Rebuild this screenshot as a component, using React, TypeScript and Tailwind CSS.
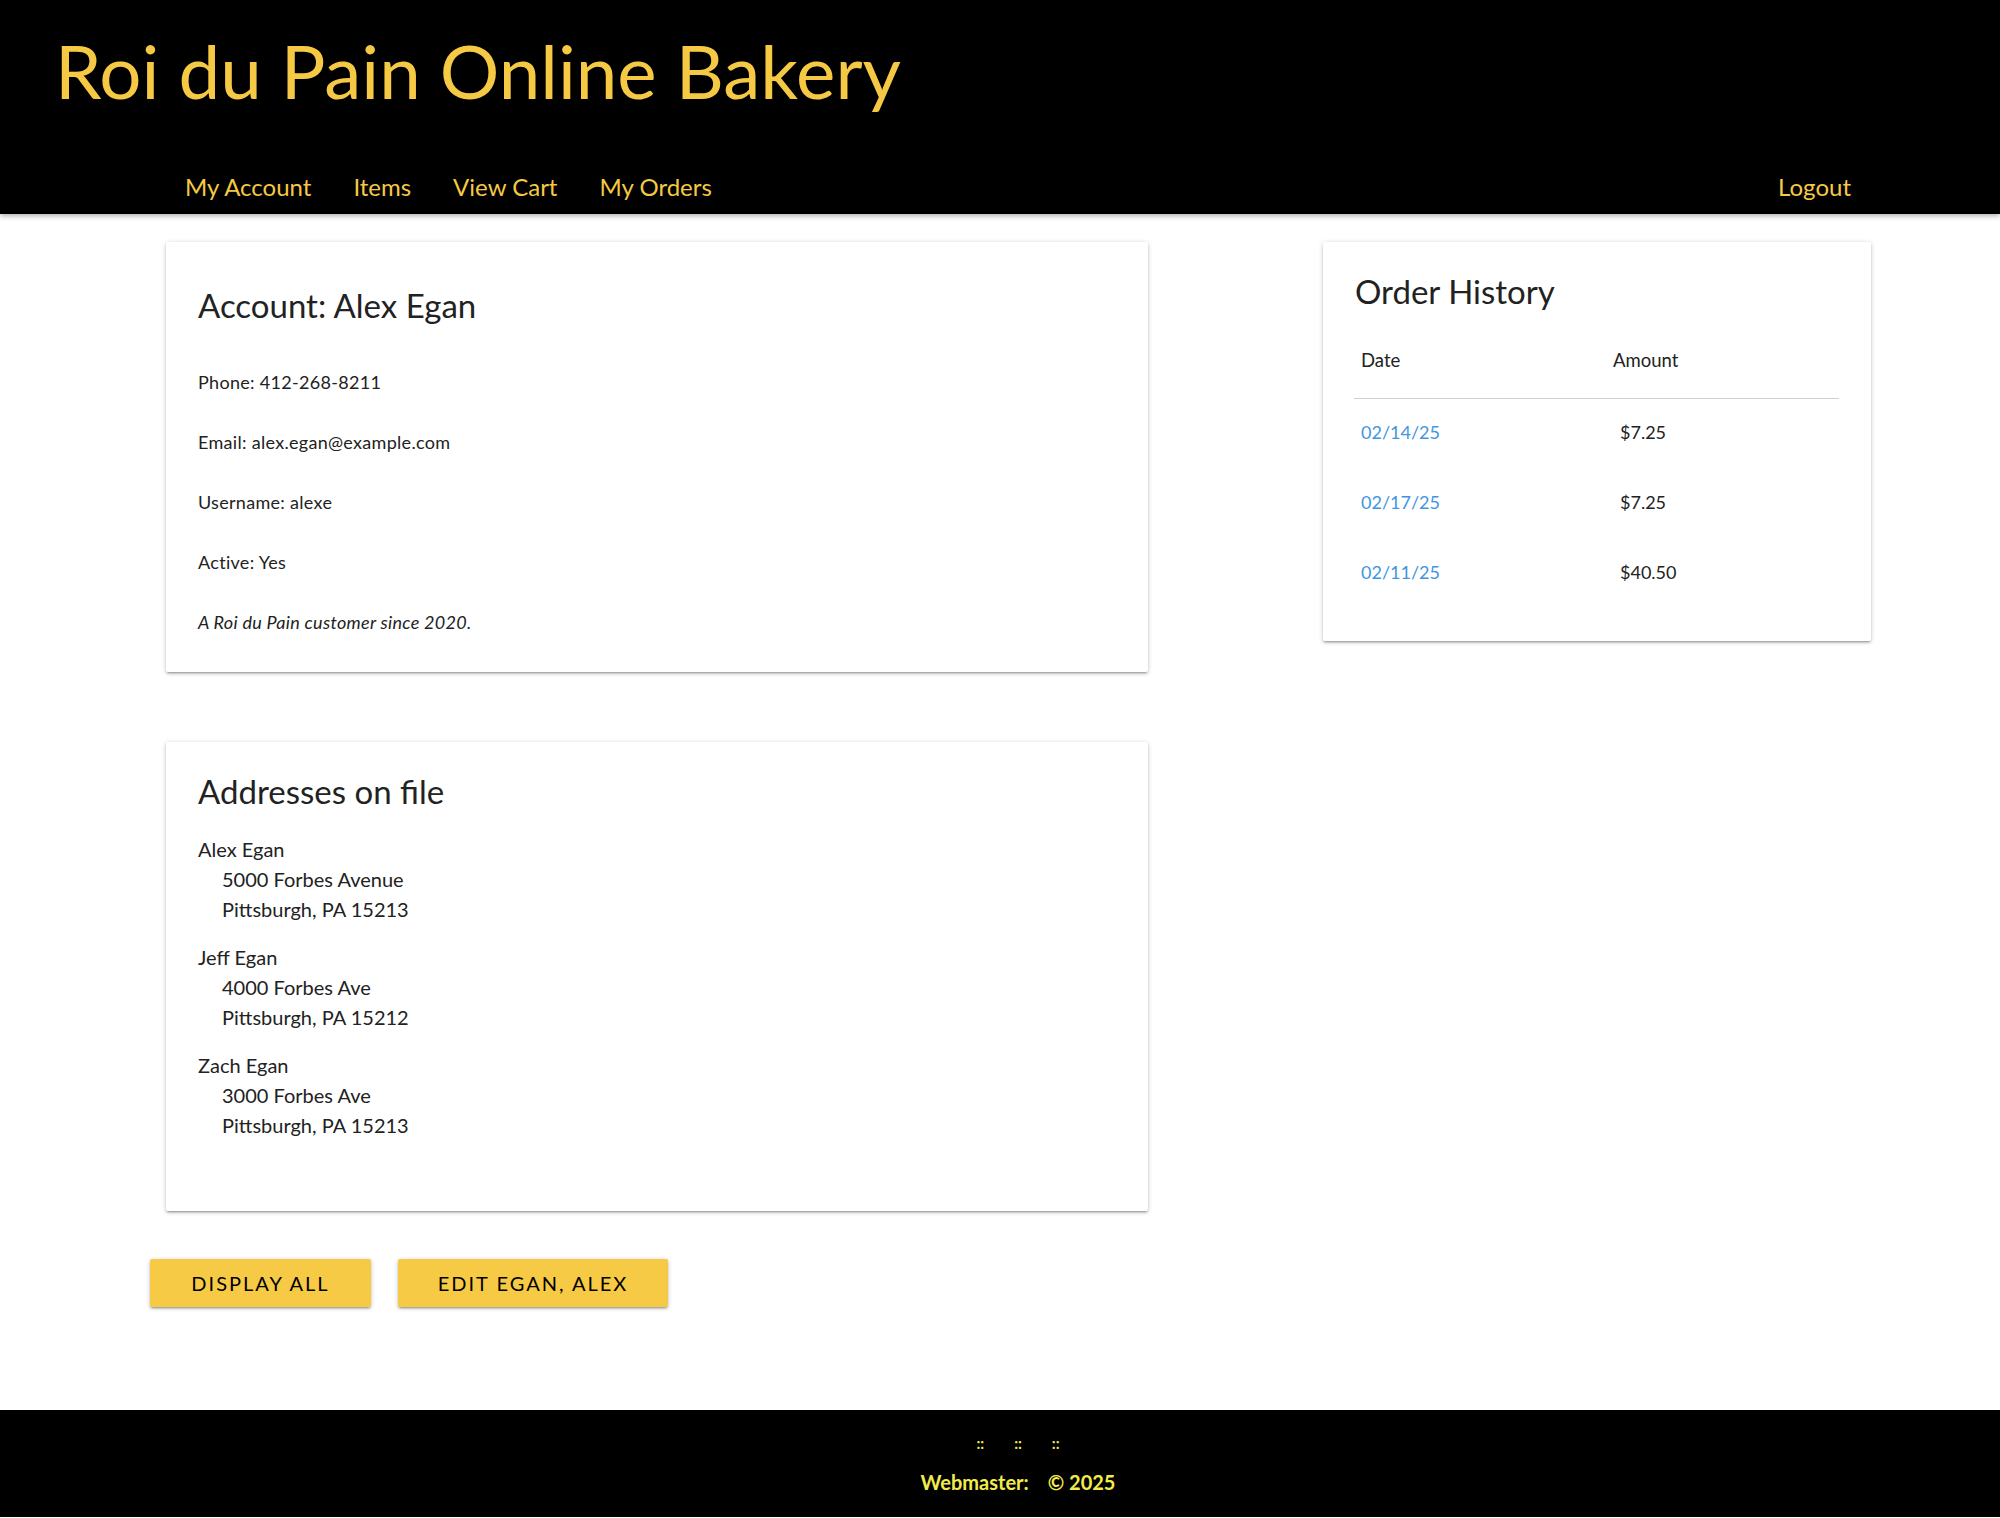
import React from "react";

const font = { fontFamily: "Lato, 'Noto Sans', sans-serif" };

const cardShadow =
  "shadow-[0_2px_2px_0_rgba(0,0,0,0.14),0_3px_1px_-2px_rgba(0,0,0,0.12),0_1px_5px_0_rgba(0,0,0,0.2)]";

function Header() {
  return (
    <header className="relative z-10 h-[214px] bg-black shadow-[0_2px_5px_rgba(0,0,0,0.3)]">
      <div className="pl-[55px] pt-[33px]">
        <h1 className="text-[74.5px] leading-none text-[#f6c944] font-normal">Roi du Pain Online Bakery</h1>
      </div>
      <nav className="mt-[67px] flex items-start justify-between pl-[185px] pr-[149px] text-[24px] leading-none text-[#f6c944]">
        <div className="flex gap-[42px]">
          <a>My Account</a>
          <a>Items</a>
          <a>View Cart</a>
          <a>My Orders</a>
        </div>
        <a>Logout</a>
      </nav>
    </header>
  );
}

function AccountCard() {
  const lines = ["Phone: 412-268-8211", "Email: alex.egan@example.com", "Username: alexe", "Active: Yes"];
  return (
    <div className={`rounded-[2px] bg-white pl-[32px] pr-[32px] pt-[43px] pb-[20px] ${cardShadow}`}>
      <h2 className="mb-[27px] text-[33px] leading-[40px] text-[#222]">Account: Alex Egan</h2>
      {lines.map((l) => (
        <p key={l} className="text-[18px] tracking-[0.3px] leading-[60px] text-[#222]">{l}</p>
      ))}
      <p className="text-[18px] italic tracking-[0.3px] leading-[60px] text-[#222]">A Roi du Pain customer since 2020.</p>
    </div>
  );
}

function AddressCard() {
  const addrs = [
    ["Alex Egan", "5000 Forbes Avenue", "Pittsburgh, PA 15213"],
    ["Jeff Egan", "4000 Forbes Ave", "Pittsburgh, PA 15212"],
    ["Zach Egan", "3000 Forbes Ave", "Pittsburgh, PA 15213"],
  ];
  return (
    <div className={`rounded-[2px] bg-white pl-[32px] pr-[32px] pt-[29px] pb-[71px] ${cardShadow}`}>
      <h2 className="mb-[23px] text-[33px] leading-[40px] text-[#222]">Addresses on file</h2>
      <div className="flex flex-col gap-[18px]">
        {addrs.map((a) => (
          <div key={a[0]} className="text-[20px] leading-[30px] text-[#222]">
            <div>{a[0]}</div>
            <div className="pl-[24px]">{a[1]}</div>
            <div className="pl-[24px]">{a[2]}</div>
          </div>
        ))}
      </div>
    </div>
  );
}

function OrderHistory() {
  const rows = [
    ["02/14/25", "$7.25"],
    ["02/17/25", "$7.25"],
    ["02/11/25", "$40.50"],
  ];
  return (
    <div className={`w-[548px] self-start rounded-[2px] bg-white pl-[31px] pr-[32px] pt-[29px] pb-[32px] ${cardShadow}`}>
      <h2 className="pl-[1px] text-[33px] leading-[40px] text-[#222]">Order History</h2>
      <div className="mt-[34px] flex border-b border-[#d0d0d0] pb-[23px] text-[18.5px] leading-[30px] text-[#222]">
        <div className="w-[252px] pl-[7px]">Date</div>
        <div className="pl-[7px]">Amount</div>
      </div>
      {rows.map((r) => (
        <div key={r[0]} className="flex h-[70px] text-[18px] leading-[66px]">
          <a className="w-[252px] pl-[7px] text-[#4196e0]">{r[0]}</a>
          <div className="pl-[14px] text-[#222]">{r[1]}</div>
        </div>
      ))}
    </div>
  );
}

function Buttons() {
  const btn =
    "flex h-[48px] items-center justify-center rounded-[2px] bg-[#f7ca45] text-[20px] tracking-[2px] text-black uppercase shadow-[0_2px_2px_0_rgba(0,0,0,0.14),0_3px_1px_-2px_rgba(0,0,0,0.12),0_1px_5px_0_rgba(0,0,0,0.2)]";
  return (
    <div className="mt-[48px] flex gap-[27px] pl-[150px]">
      <button className={`${btn} w-[221px]`}>Display All</button>
      <button className={`${btn} w-[270px]`}>Edit Egan, Alex</button>
    </div>
  );
}

function Footer() {
  return (
    <footer className="mt-[103px] flex h-[107px] flex-col items-center bg-black pl-[36px] text-[#f1ec4c]">
      <div className="mt-[25px] flex gap-[30px] text-[15px] font-bold leading-[16px]">
        <span>::</span>
        <span>::</span>
        <span>::</span>
      </div>
      <div className="mt-[19px] flex gap-[19px] text-[20px] font-bold leading-[24px]">
        <span>Webmaster:</span>
        <span>© 2025</span>
      </div>
    </footer>
  );
}

export default function App() {
  return (
    <div className="min-h-[1518px] bg-white" style={font}>
      <Header />
      <main className="pt-[28px]">
        <div className="flex pl-[166px]">
          <div className="flex w-[982px] flex-col gap-[70px]">
            <AccountCard />
            <AddressCard />
          </div>
          <div className="ml-[175px]">
            <OrderHistory />
          </div>
        </div>
        <Buttons />
      </main>
      <Footer />
    </div>
  );
}
